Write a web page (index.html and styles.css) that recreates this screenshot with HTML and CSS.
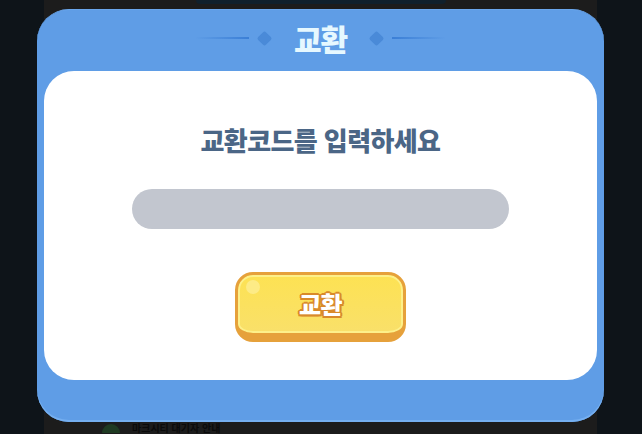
FILE: index.html
```html
<!DOCTYPE html>
<html lang="ko">
<head>
    <meta charset="UTF-8"/>
    <meta content="width=device-width, initial-scale=1.0" name="viewport"/>
    <title>교환</title>
    <link rel="stylesheet" href="styles.css">
</head>
<body>
    <div class="stage">
        <div class="game-panel">
            <div class="game-top">
                <div class="game-bar"></div>
            </div>
            <div class="game-bottom">
                <span class="game-icon"></span>
                <span class="game-text">마크시티 대기자 안내</span>
            </div>
        </div>

        <div class="modal">
            <div class="modal-head">
                <span class="deco-line left"></span>
                <span class="deco-diamond"></span>
                <h1>교환</h1>
                <span class="deco-diamond"></span>
                <span class="deco-line right"></span>
            </div>
            <div class="modal-body">
                <p class="prompt">교환코드를 입력하세요</p>
                <input class="code-input" type="text" aria-label="교환코드">
                <button class="exchange-btn">교환</button>
            </div>
        </div>
    </div>
</body>
</html>
```

FILE: styles.css
```css
body {
    margin: 0;
    background: #0e1419;
    font-family: "Noto Sans CJK KR", "Noto Sans", sans-serif;
}
.stage {
    position: relative;
    width: 642px;
    height: 434px;
    overflow: hidden;
    display: flex;
    justify-content: center;
}
.game-panel {
    width: 553px;
    margin-left: -1px;
    background: #1c1c1c;
    display: flex;
    flex-direction: column;
    justify-content: space-between;
}
.game-top {
    height: 9px;
    display: flex;
    justify-content: center;
}
.game-bar {
    width: 250px;
    height: 4px;
    background: #10202c;
    border-radius: 0 0 6px 6px;
}
.game-bottom {
    height: 12px;
    display: flex;
    align-items: center;
    gap: 12px;
    padding-left: 58px;
}
.game-icon {
    width: 18px;
    height: 9px;
    background: #1f3a22;
    border-radius: 9px 9px 0 0;
}
.game-text {
    color: #0a0a0a;
    font-size: 10px;
    font-weight: 700;
    line-height: 12px;
}
.modal {
    position: absolute;
    left: 37px;
    top: 9px;
    width: 567px;
    height: 413px;
    box-sizing: border-box;
    background: #5f9de6;
    border-radius: 32px;
    border-top: 1px solid #6aa6ec;
    box-shadow: inset 0 -2px 0 #75aff0;
    padding: 0 7px;
    display: flex;
    flex-direction: column;
}
.modal-head {
    height: 61px;
    box-sizing: border-box;
    padding-bottom: 5px;
    display: flex;
    align-items: center;
    justify-content: center;
    gap: 10px;
}
.modal-head h1 {
    margin: 0 14px;
    color: #e6f8ff;
    font-size: 30px;
    font-weight: 900;
    line-height: 1;
    letter-spacing: -1px;
}
.deco-line {
    width: 54px;
    height: 2px;
}
.deco-line.left {
    background: linear-gradient(to right, rgba(57, 125, 214, 0), #3b7fd6);
}
.deco-line.right {
    background: linear-gradient(to left, rgba(57, 125, 214, 0), #3b7fd6);
}
.deco-diamond {
    width: 11px;
    height: 11px;
    background: #4a8ad8;
    transform: rotate(45deg);
    border-radius: 2px;
}
.modal-body {
    height: 309px;
    background: #ffffff;
    border-radius: 30px;
    display: flex;
    flex-direction: column;
    align-items: center;
}
.prompt {
    margin: 53px 0 0;
    color: #4b6686;
    font-size: 26px;
    font-weight: 900;
    line-height: 32px;
    letter-spacing: -0.6px;
}
.code-input {
    margin-top: 33px;
    width: 377px;
    height: 40px;
    box-sizing: border-box;
    border: none;
    border-radius: 20px;
    background: #c2c6cf;
    outline: none;
}
.exchange-btn {
    position: relative;
    margin-top: 43px;
    width: 171px;
    height: 70px;
    box-sizing: border-box;
    border: 3px solid #e6a13b;
    border-bottom-width: 9px;
    border-radius: 18px;
    background: linear-gradient(#fde253, #f9e06a);
    box-shadow: inset 0 0 0 2px #fdf08a;
    color: #ffffff;
    font-family: "Noto Sans CJK KR", "Noto Sans", sans-serif;
    font-size: 24px;
    font-weight: 900;
    letter-spacing: -0.5px;
    padding: 0 0 2px;
    text-shadow: 2px 0 0 #d98a2a, -2px 0 0 #d98a2a, 0 2px 0 #d98a2a, 0 -2px 0 #d98a2a,
        1.5px 1.5px 0 #d98a2a, -1.5px 1.5px 0 #d98a2a, 1.5px -1.5px 0 #d98a2a, -1.5px -1.5px 0 #d98a2a;
}
.exchange-btn::before {
    content: "";
    position: absolute;
    left: 8px;
    top: 5px;
    width: 14px;
    height: 14px;
    border-radius: 50%;
    background: #fdeb86;
}
```
